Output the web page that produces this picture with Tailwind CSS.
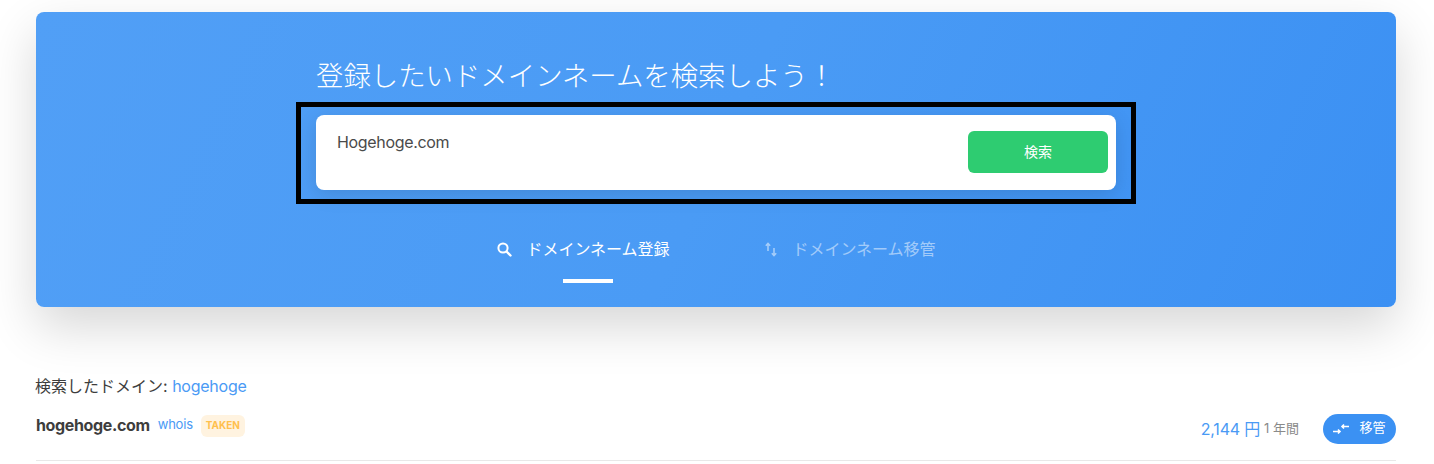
<!DOCTYPE html>
<html lang="ja">
<head>
<meta charset="utf-8">
<script src="https://cdn.jsdelivr.net/npm/@tailwindcss/browser@4"></script>
</head>
<body class="bg-white overflow-hidden font-['Inter','Noto_Sans_CJK_JP',sans-serif] text-[#3d3d3d]">
<div class="w-[1434px] h-[464px] pl-9 pr-[38px] pt-3 overflow-hidden">
  <section class="h-[295px] rounded-lg bg-[linear-gradient(115deg,#519ff6_0%,#4a9bf5_50%,#3b90f3_100%)] shadow-[0_20px_50px_rgba(0,0,0,0.16)] flex flex-col items-center pt-[46px]">
    <h1 class="w-[800px] h-11 pt-px text-[27.4px] leading-[34px] font-light text-white">登録したいドメインネームを検索しよう！</h1>
    <div class="w-[840px] h-[102px] border-[5px] border-black px-[15px] pt-2">
      <div class="h-[75px] bg-white rounded-lg shadow-[0_5px_20px_rgba(0,0,0,0.12)] flex justify-between pl-[21px] pr-2 pt-[15px]">
        <span class="text-base leading-[24px] tracking-[-0.33px] text-[#4a4a4a]">Hogehoge.com</span>
        <button class="w-[140px] h-[42px] mt-px rounded-md bg-[#2ecc71] text-white text-sm flex items-center justify-center">検索</button>
      </div>
    </div>
    <nav class="flex mt-[29px] gap-[94px]">
      <div class="relative flex items-center h-8 w-[174px] text-white text-base">
        <svg class="w-4 h-4 mr-[14px]" viewBox="0 0 16 16" fill="none" stroke="currentColor"><circle cx="7" cy="7" r="4.6" stroke-width="2"/><path d="M10.5 10.5L14.5 14.5" stroke-width="2.4" stroke-linecap="round"/></svg>
        <span>ドメインネーム登録</span>
        <span class="absolute left-[67px] top-[46px] w-[50px] h-1 bg-white"></span>
      </div>
      <div class="flex items-center h-8 text-white/50 text-base">
        <svg class="w-3.5 h-4 mr-[14px]" viewBox="0 0 14 16" fill="none" stroke="currentColor" stroke-width="1.6"><path d="M4 10V2.5M1.8 4.8L4 2.5l2.2 2.3M10 7v7.5M7.8 12.2L10 14.5l2.2-2.3"/></svg>
        <span>ドメインネーム移管</span>
      </div>
    </nav>
  </section>
  <p class="mt-[67px] text-base leading-6 -ml-px">検索したドメイン: <span class="text-[#4a9af5] tracking-[-0.25px]">hogehoge</span></p>
  <div class="mt-[13px] h-[50px] flex justify-between border-b border-[#e8e8e8]">
    <div class="flex items-center h-[28px]">
      <strong class="font-bold text-base tracking-[-0.36px]">hogehoge.com</strong>
      <span class="ml-2 text-[13px] tracking-[-0.2px] text-[#4a9af5]">whois</span>
      <span class="ml-2 mt-px h-[22px] w-11 justify-center rounded-md bg-[#fff3e0] text-[#ffc04d] text-[10px] font-bold flex items-center">TAKEN</span>
    </div>
    <div class="flex items-center h-[30px] mt-[3px]">
      <span class="text-base text-[#4a9af5] tracking-[-0.2px]">2,144 円</span>
      <span class="ml-1 text-[13px] text-[#8a8a8a]">1 年間</span>
      <button class="ml-6 w-[73px] h-[30px] pb-0.5 rounded-full bg-[#3b91f3] text-white text-[13px] flex items-center justify-center gap-2.5">
        <svg class="w-4 h-3.5 mt-0.5" viewBox="0 0 16 14" fill="none" stroke="currentColor" stroke-width="1.6"><path d="M0 9.5h7M5 7.5l2 2-2 2M16 4.5H9M11 2.5l-2 2 2 2"/></svg>
        <span>移管</span>
      </button>
    </div>
  </div>
</div>
</body>
</html>
